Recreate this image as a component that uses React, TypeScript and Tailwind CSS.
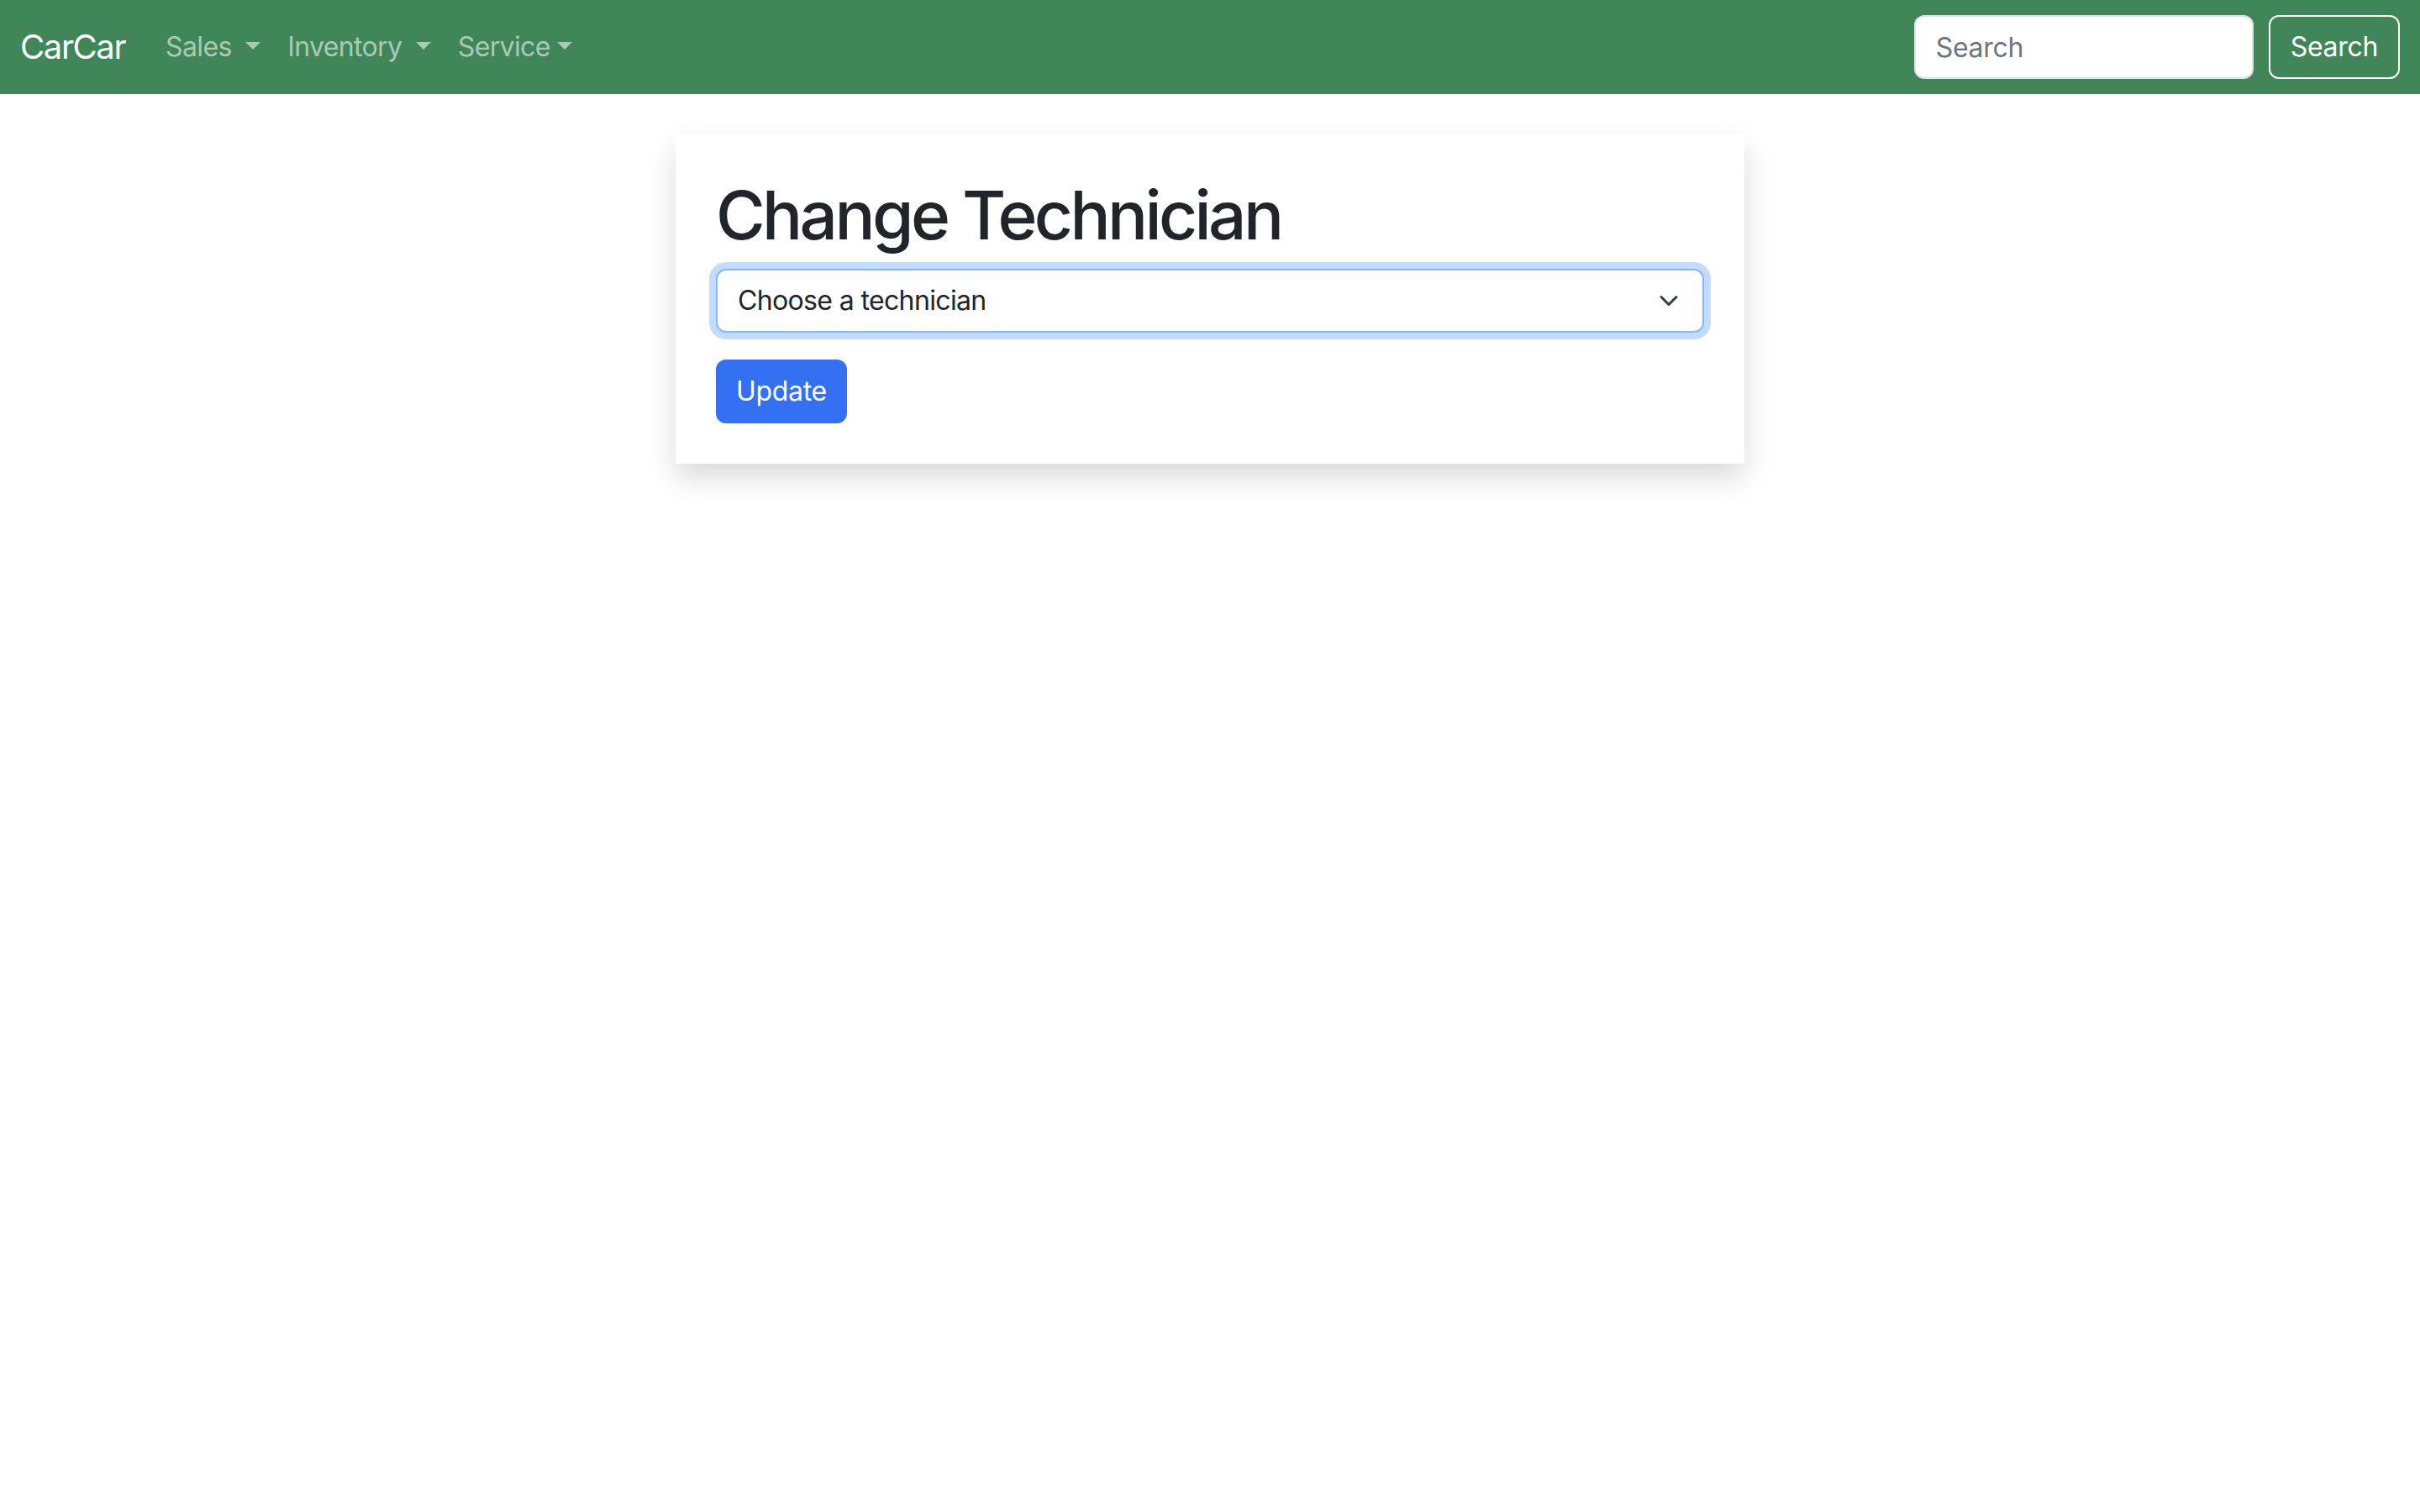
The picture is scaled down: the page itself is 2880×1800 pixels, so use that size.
import * as React from 'react';

function Caret() {
    return (
        <span className="inline-block ml-[0.255em] align-[0.255em] w-0 h-0 border-t-[0.3em] border-t-current border-x-[0.3em] border-x-transparent" />
    );
}

function NavBar() {
    return (
        <nav className="h-[112px] bg-[#418658] px-[24px] flex items-center justify-between">
            <div className="flex items-center">
                <a href="#" className="text-[40px] leading-[60px] text-white mr-[32px] tracking-[-0.035em]">CarCar</a>
                <ul className="flex items-center text-[32px] leading-[48px] text-[#a8ccb3] tracking-[-0.02em]">
                    <li className="px-[16px]">Sales <Caret /></li>
                    <li className="px-[16px]">Inventory <Caret /></li>
                    <li className="px-[16px]">Service<Caret /></li>
                </ul>
            </div>
            <form className="flex items-center tracking-[-0.02em]" onSubmit={e => e.preventDefault()}>
                <input
                    type="search"
                    placeholder="Search"
                    className="w-[404px] h-[76px] mr-[18px] px-[24px] bg-white border-2 border-[#dee2e6] rounded-[12px] text-[32px] text-[#212529] placeholder:text-[#6c757d] outline-none"
                />
                <button className="h-[76px] px-[24px] border-2 border-white rounded-[12px] text-[32px] text-white">
                    Search
                </button>
            </form>
        </nav>
    );
}

export default function App() {
    return (
        <div className="min-h-[1800px] bg-white font-['Inter',sans-serif] text-[#212529]">
            <NavBar />
            <div className="w-[1272px] mx-auto mt-[48px]">
                <div className="p-[48px] bg-white shadow-[0_16px_32px_rgba(0,0,0,0.15)]">
                    <h1 className="text-[80px] leading-[96px] font-medium mb-[16px] tracking-[-0.045em]">Change Technician</h1>
                    <form onSubmit={e => e.preventDefault()}>
                        {/* technician picker, shown focused */}
                        <div className="mb-[32px]">
                            <div className="h-[76px] pl-[24px] pr-[24px] flex items-center justify-between border-2 border-[#86b7fe] rounded-[12px] shadow-[0_0_0_8px_rgba(13,110,253,0.25)] bg-white">
                                <span className="text-[32px] text-[#212529] tracking-[-0.02em]">Choose a technician</span>
                                <svg className="w-[32px] h-[24px]" viewBox="0 0 16 16" fill="none">
                                    <path d="m2 5 6 6 6-6" stroke="#343a40" strokeWidth="2" strokeLinecap="round" strokeLinejoin="round" />
                                </svg>
                            </div>
                        </div>
                        <button className="h-[76px] px-[24px] bg-[#3370f2] text-white text-[32px] rounded-[12px] tracking-[-0.01em]">
                            Update
                        </button>
                    </form>
                </div>
            </div>
        </div>
    );
}
